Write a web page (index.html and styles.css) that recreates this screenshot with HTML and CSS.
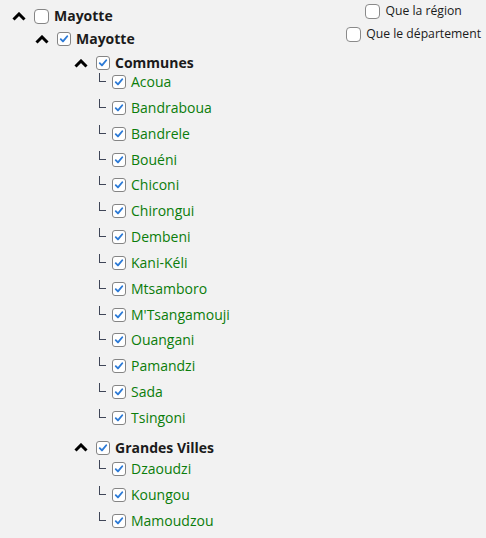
FILE: index.html
```html
<!DOCTYPE html>
<html lang="fr">
<head>
<meta charset="utf-8">
<link rel="stylesheet" href="styles.css">
<title>Mayotte</title>
</head>
<body>
<div class="page">
  <div class="tree">
    <div class="row head lvl0">
      <svg class="caret" viewBox="0 0 14 9"><polyline points="1.5,7.5 7,2 12.5,7.5"/></svg>
      <span class="cb cb-big"></span>
      <span class="label strong">Mayotte</span>
    </div>
    <div class="row head lvl1">
      <svg class="caret" viewBox="0 0 14 9"><polyline points="1.5,7.5 7,2 12.5,7.5"/></svg>
      <span class="cb checked"><svg viewBox="0 0 14 14"><polyline points="3.2,7.2 5.8,9.8 10.8,3.8"/></svg></span>
      <span class="label strong">Mayotte</span>
    </div>
    <div class="group">
      <div class="row head lvl2">
        <svg class="caret" viewBox="0 0 14 9"><polyline points="1.5,7.5 7,2 12.5,7.5"/></svg>
        <span class="cb checked"><svg viewBox="0 0 14 14"><polyline points="3.2,7.2 5.8,9.8 10.8,3.8"/></svg></span>
        <span class="label strong">Communes</span>
      </div>
      <div class="leaves">
        <div class="row leaf"><span class="elbow"></span><span class="cb checked"><svg viewBox="0 0 14 14"><polyline points="3.2,7.2 5.8,9.8 10.8,3.8"/></svg></span><span class="label green">Acoua</span></div>
        <div class="row leaf"><span class="elbow"></span><span class="cb checked"><svg viewBox="0 0 14 14"><polyline points="3.2,7.2 5.8,9.8 10.8,3.8"/></svg></span><span class="label green">Bandraboua</span></div>
        <div class="row leaf"><span class="elbow"></span><span class="cb checked"><svg viewBox="0 0 14 14"><polyline points="3.2,7.2 5.8,9.8 10.8,3.8"/></svg></span><span class="label green">Bandrele</span></div>
        <div class="row leaf"><span class="elbow"></span><span class="cb checked"><svg viewBox="0 0 14 14"><polyline points="3.2,7.2 5.8,9.8 10.8,3.8"/></svg></span><span class="label green">Bouéni</span></div>
        <div class="row leaf"><span class="elbow"></span><span class="cb checked"><svg viewBox="0 0 14 14"><polyline points="3.2,7.2 5.8,9.8 10.8,3.8"/></svg></span><span class="label green">Chiconi</span></div>
        <div class="row leaf"><span class="elbow"></span><span class="cb checked"><svg viewBox="0 0 14 14"><polyline points="3.2,7.2 5.8,9.8 10.8,3.8"/></svg></span><span class="label green">Chirongui</span></div>
        <div class="row leaf"><span class="elbow"></span><span class="cb checked"><svg viewBox="0 0 14 14"><polyline points="3.2,7.2 5.8,9.8 10.8,3.8"/></svg></span><span class="label green">Dembeni</span></div>
        <div class="row leaf"><span class="elbow"></span><span class="cb checked"><svg viewBox="0 0 14 14"><polyline points="3.2,7.2 5.8,9.8 10.8,3.8"/></svg></span><span class="label green">Kani-Kéli</span></div>
        <div class="row leaf"><span class="elbow"></span><span class="cb checked"><svg viewBox="0 0 14 14"><polyline points="3.2,7.2 5.8,9.8 10.8,3.8"/></svg></span><span class="label green">Mtsamboro</span></div>
        <div class="row leaf"><span class="elbow"></span><span class="cb checked"><svg viewBox="0 0 14 14"><polyline points="3.2,7.2 5.8,9.8 10.8,3.8"/></svg></span><span class="label green">M'Tsangamouji</span></div>
        <div class="row leaf"><span class="elbow"></span><span class="cb checked"><svg viewBox="0 0 14 14"><polyline points="3.2,7.2 5.8,9.8 10.8,3.8"/></svg></span><span class="label green">Ouangani</span></div>
        <div class="row leaf"><span class="elbow"></span><span class="cb checked"><svg viewBox="0 0 14 14"><polyline points="3.2,7.2 5.8,9.8 10.8,3.8"/></svg></span><span class="label green">Pamandzi</span></div>
        <div class="row leaf"><span class="elbow"></span><span class="cb checked"><svg viewBox="0 0 14 14"><polyline points="3.2,7.2 5.8,9.8 10.8,3.8"/></svg></span><span class="label green">Sada</span></div>
        <div class="row leaf"><span class="elbow"></span><span class="cb checked"><svg viewBox="0 0 14 14"><polyline points="3.2,7.2 5.8,9.8 10.8,3.8"/></svg></span><span class="label green">Tsingoni</span></div>
      </div>
    </div>
    <div class="group group-next">
      <div class="row head lvl2">
        <svg class="caret" viewBox="0 0 14 9"><polyline points="1.5,7.5 7,2 12.5,7.5"/></svg>
        <span class="cb checked"><svg viewBox="0 0 14 14"><polyline points="3.2,7.2 5.8,9.8 10.8,3.8"/></svg></span>
        <span class="label strong">Grandes Villes</span>
      </div>
      <div class="leaves">
        <div class="row leaf"><span class="elbow"></span><span class="cb checked"><svg viewBox="0 0 14 14"><polyline points="3.2,7.2 5.8,9.8 10.8,3.8"/></svg></span><span class="label green">Dzaoudzi</span></div>
        <div class="row leaf"><span class="elbow"></span><span class="cb checked"><svg viewBox="0 0 14 14"><polyline points="3.2,7.2 5.8,9.8 10.8,3.8"/></svg></span><span class="label green">Koungou</span></div>
        <div class="row leaf"><span class="elbow"></span><span class="cb checked"><svg viewBox="0 0 14 14"><polyline points="3.2,7.2 5.8,9.8 10.8,3.8"/></svg></span><span class="label green">Mamoudzou</span></div>
      </div>
    </div>
  </div>
  <div class="options">
    <label class="opt"><span class="cb cb-opt"></span><span class="opt-text">Que la région</span></label>
    <label class="opt"><span class="cb cb-opt"></span><span class="opt-text">Que le département</span></label>
  </div>
</div>
</body>
</html>
```

FILE: styles.css
```css
html, body {
  margin: 0;
  padding: 0;
  background: #f2f2f2;
}
body {
  font-family: "Open Sans", "Noto Sans", sans-serif;
  font-size: 14px;
  color: #1b1b1b;
}
.page {
  display: flex;
  justify-content: space-between;
  align-items: flex-start;
  padding: 6px 5px 0 0;
}
.tree {
  display: flex;
  flex-direction: column;
}
.row {
  display: flex;
  align-items: center;
  height: 20px;
  line-height: 20px;
  white-space: nowrap;
}
.lvl0 { padding-left: 12px; }
.lvl1 { padding-left: 35px; margin-top: 3px; }
.lvl2 { padding-left: 74px; margin-top: 4px; }
.group-next { margin-top: 10px; }
.group-next .lvl2 { margin-top: 0; }
.leaves {
  display: flex;
  flex-direction: column;
  padding-left: 99px;
  margin-top: -1px;
}
.group-next .leaves { margin-top: 1px; }
.leaf + .leaf { margin-top: 5.85px; }
.caret {
  width: 14px;
  height: 9px;
  margin-right: 8px;
  flex: none;
}
.caret polyline {
  fill: none;
  stroke: #000;
  stroke-width: 3;
  stroke-linecap: butt;
  stroke-linejoin: miter;
}
.cb {
  box-sizing: border-box;
  width: 14px;
  height: 14px;
  border: 1px solid #858585;
  border-radius: 3px;
  background: #fff;
  flex: none;
  display: inline-flex;
}
.cb-big {
  width: 15px;
  height: 15px;
  border-radius: 4px;
}
.cb svg {
  width: 12px;
  height: 12px;
}
.cb svg polyline {
  fill: none;
  stroke: #2c7ad6;
  stroke-width: 2.2;
  stroke-linecap: round;
  stroke-linejoin: round;
}
.label { margin-left: 5px; }
.strong { font-weight: 700; color: #1b1b1b; }
.green { color: #0b7d0b; }
.elbow {
  box-sizing: border-box;
  flex: none;
  width: 7px;
  height: 9px;
  border-left: 1px solid #3f4658;
  border-bottom: 1px solid #3f4658;
  align-self: flex-start;
  margin-top: 1px;
  margin-right: 6px;
}
.options {
  display: flex;
  flex-direction: column;
  align-items: center;
  gap: 7px;
  margin-top: -3px;
}
.opt {
  display: flex;
  align-items: center;
  font-size: 12.2px;
  line-height: 16px;
  color: #1b1b1b;
}
.cb-opt {
  width: 15px;
  height: 15px;
  border-radius: 4px;
  border-color: #8a8a8a;
}
.opt-text { margin-left: 5px; }
```
